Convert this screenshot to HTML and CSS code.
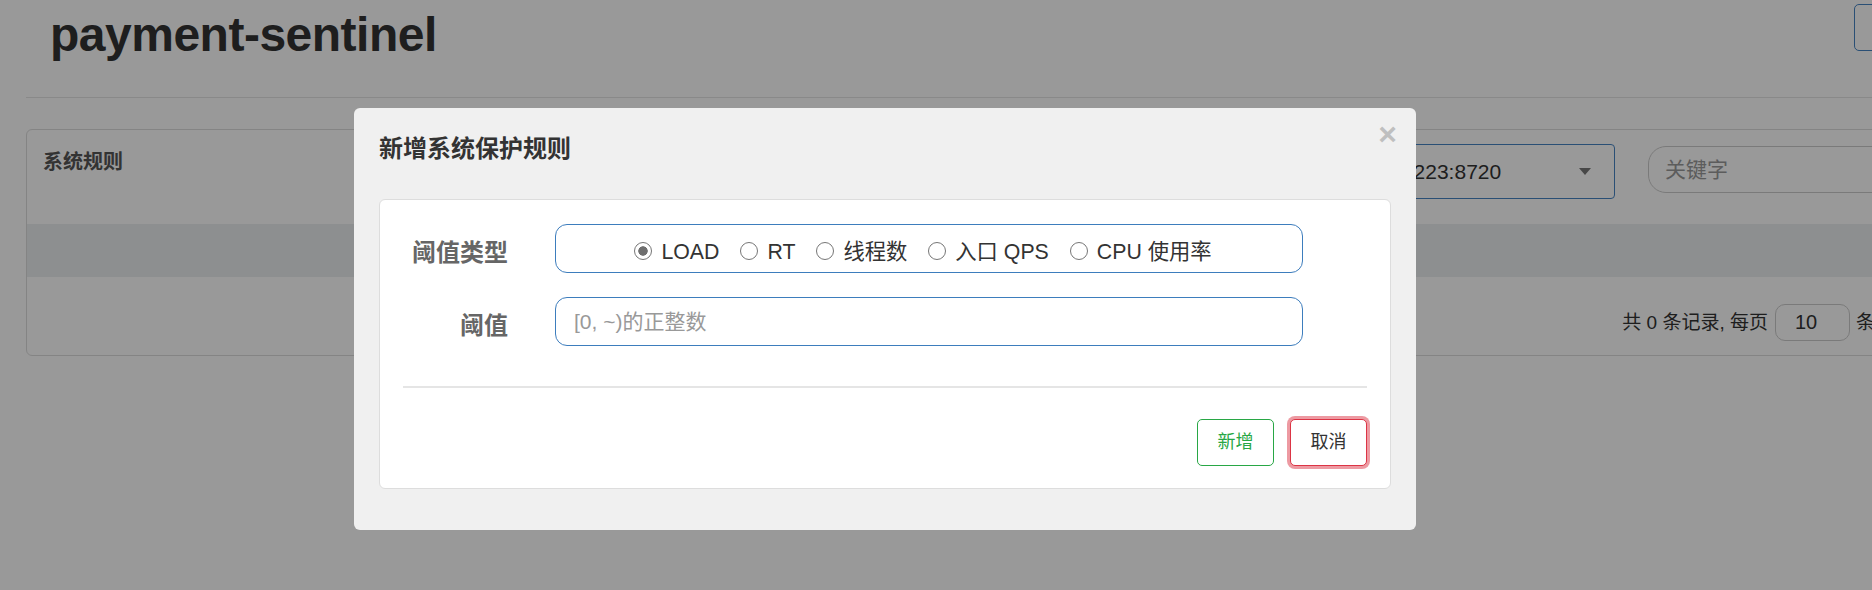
FILE: index.html
```html
<!DOCTYPE html>
<html lang="zh-CN">
<head>
<meta charset="utf-8">
<title>payment-sentinel</title>
<link rel="stylesheet" href="styles.css">
</head>
<body>
<div class="page">
  <header class="page-header">
    <h1 class="app-title">payment-sentinel</h1>
    <div class="header-btn"></div>
  </header>
  <section class="panel">
    <div class="panel-heading">
      <span class="panel-title">系统规则</span>
      <div class="toolbar">
        <div class="machine-select"><span class="select-text">172.16.2.223:8720</span><span class="caret"></span></div>
        <input class="keyword-input" type="text" placeholder="关键字">
      </div>
    </div>
    <div class="table-head"></div>
    <div class="table-foot">
      <span>共 0 条记录, 每页</span>
      <input class="page-size" type="text" value="10">
      <span>条</span>
    </div>
  </section>
</div>

<div class="backdrop"></div>

<div class="modal">
  <button class="close" type="button">×</button>
  <h4 class="modal-title">新增系统保护规则</h4>
  <div class="modal-body">
    <div class="form-row">
      <label class="form-label">阈值类型</label>
      <div class="radio-group">
        <label class="radio-item"><input class="radio" type="radio" name="grade" checked>LOAD</label>
        <label class="radio-item"><input class="radio" type="radio" name="grade">RT</label>
        <label class="radio-item"><input class="radio" type="radio" name="grade">线程数</label>
        <label class="radio-item"><input class="radio" type="radio" name="grade">入口 QPS</label>
        <label class="radio-item"><input class="radio" type="radio" name="grade">CPU 使用率</label>
      </div>
    </div>
    <div class="form-row">
      <label class="form-label">阈值</label>
      <input class="text-input" type="text" placeholder="[0, ~)的正整数">
    </div>
    <div class="divider"></div>
    <div class="actions">
      <button class="btn btn-add" type="button">新增</button>
      <button class="btn btn-cancel" type="button">取消</button>
    </div>
  </div>
</div>
</body>
</html>
```
FILE: styles.css
```css
* { box-sizing: border-box; }
html, body { margin: 0; padding: 0; }
body {
  font-family: "Liberation Sans", "Noto Sans CJK SC", sans-serif;
  color: #333;
  background: #fff;
  width: 1872px;
  height: 590px;
  overflow: hidden;
}
.page { width: 2000px; }

/* header */
.page-header {
  margin-left: 26px;
  width: 1948px;
  height: 98px;
  padding: 9px 0 0 24px;
  border-bottom: 1px solid #e5e5e5;
  display: flex;
  align-items: flex-start;
}
.app-title {
  margin: 0;
  font-size: 48px;
  line-height: 52.8px;
  font-weight: bold;
  letter-spacing: -0.5px;
  color: #333;
}
.header-btn {
  margin-left: auto;
  margin-top: -5px;
  width: 120px;
  height: 47px;
  border: 1px solid #4784c4;
  border-radius: 5px;
  background: #fff;
}

/* panel */
.panel {
  margin: 31px 0 0 26px;
  width: 1948px;
  border: 1px solid #ddd;
  border-radius: 6px;
  overflow: hidden;
}
.panel-heading {
  height: 94px;
  padding: 17px 25px 0 16px;
  display: flex;
  align-items: flex-start;
}
.panel-title {
  font-size: 20px;
  line-height: 30px;
  font-weight: bold;
  color: #555;
}
.toolbar {
  margin-left: auto;
  margin-top: -3px;
  display: flex;
  align-items: flex-start;
}
.machine-select {
  width: 315px;
  height: 55px;
  border: 1px solid #4784c4;
  border-radius: 4px;
  display: flex;
  align-items: center;
  padding: 0 23px 0 25px;
  font-size: 21px;
  color: #333;
  background: #fff;
}
.caret {
  margin-left: auto;
  width: 0;
  height: 0;
  border-left: 6.5px solid transparent;
  border-right: 6.5px solid transparent;
  border-top: 7px solid #777;
}
.keyword-input {
  margin-left: 33px;
  margin-top: 2px;
  width: 300px;
  height: 47px;
  border: 1px solid #ccc;
  border-radius: 18px;
  padding: 0 16px;
  font-family: inherit;
  font-size: 21px;
  color: #333;
  background: #fff;
  outline: none;
}
.keyword-input::placeholder { color: #999; }
.table-head {
  height: 53px;
  background: #eceef1;
}
.table-foot {
  height: 78px;
  padding: 27px 98px 0 0;
  display: flex;
  justify-content: flex-end;
  align-items: flex-start;
  font-size: 19px;
  line-height: 37px;
  color: #333;
}
.page-size {
  margin: 0 6px 0 7px;
  width: 75px;
  height: 37px;
  border: 1px solid #ccc;
  border-radius: 10px;
  padding: 0 0 0 19px;
  font-family: inherit;
  font-size: 20px;
  color: #333;
  background: #fff;
  outline: none;
}

/* backdrop + modal */
.backdrop {
  position: fixed;
  inset: 0;
  background: rgba(0, 0, 0, 0.4);
}
.modal {
  position: absolute;
  left: 354px;
  top: 108px;
  width: 1062px;
  background: #f0f0f0;
  border-radius: 6px;
  padding: 23px 25px 41px;
}
.close {
  position: absolute;
  top: 10px;
  right: 19px;
  padding: 0;
  border: 0;
  background: none;
  font-family: "Liberation Sans", sans-serif;
  font-size: 32px;
  line-height: 1;
  font-weight: bold;
  color: #000;
  opacity: 0.2;
  cursor: pointer;
}
.modal-title {
  margin: 0;
  font-size: 24px;
  line-height: 36px;
  font-weight: bold;
  color: #333;
}
.modal-body {
  margin-top: 32px;
  background: #fff;
  border: 1px solid #ddd;
  border-radius: 6px;
  padding: 24px 23px 22px;
}
.form-row {
  display: grid;
  grid-template-columns: 105px 748px;
  column-gap: 47px;
  margin-bottom: 24px;
}
.form-row + .form-row { margin-bottom: 0; }
.form-label {
  text-align: right;
  font-size: 24px;
  line-height: 36px;
  font-weight: bold;
  padding-top: 11px;
  color: #666;
}
.radio-group {
  height: 49px;
  border: 1px solid #3d7dbd;
  border-radius: 12px;
  display: flex;
  justify-content: center;
  align-items: flex-start;
  gap: 21px;
  padding: 12px 12px 0 0;
  font-size: 21.3px;
  line-height: 31.5px;
  color: #333;
}
.radio-item {
  display: flex;
  align-items: flex-start;
  gap: 9px;
  white-space: nowrap;
}
.radio {
  -webkit-appearance: none;
  appearance: none;
  width: 18px;
  height: 18px;
  margin: 5px 0 0;
  border: 1px solid #767676;
  border-radius: 50%;
  background: #fff;
}
.radio:checked {
  border: 1.5px solid #767676;
  background: radial-gradient(circle, #6e6e6e 0 4.4px, #fff 5px);
}
.text-input {
  height: 49px;
  border: 1px solid #3d7dbd;
  border-radius: 12px;
  padding: 0 18px;
  font-family: inherit;
  font-size: 21px;
  color: #333;
  background: #fff;
  outline: none;
}
.text-input::placeholder { color: #999; }
.divider {
  margin-top: 40px;
  height: 2px;
  background: #e5e5e5;
}
.actions {
  margin-top: 31px;
  display: flex;
  justify-content: flex-end;
  gap: 16px;
}
.btn {
  height: 47px;
  padding: 0 19.5px;
  font-family: "Liberation Sans", "Noto Sans CJK SC", sans-serif;
  font-size: 18px;
  line-height: 45px;
  background: #fff;
  border: 1px solid;
  border-radius: 5px;
  cursor: pointer;
}
.btn-add {
  border-color: #28a745;
  color: #28a745;
}
.btn-cancel {
  border-color: #dc3545;
  color: #333;
  box-shadow: 0 0 0 3px rgba(220, 53, 69, 0.5);
}
```
